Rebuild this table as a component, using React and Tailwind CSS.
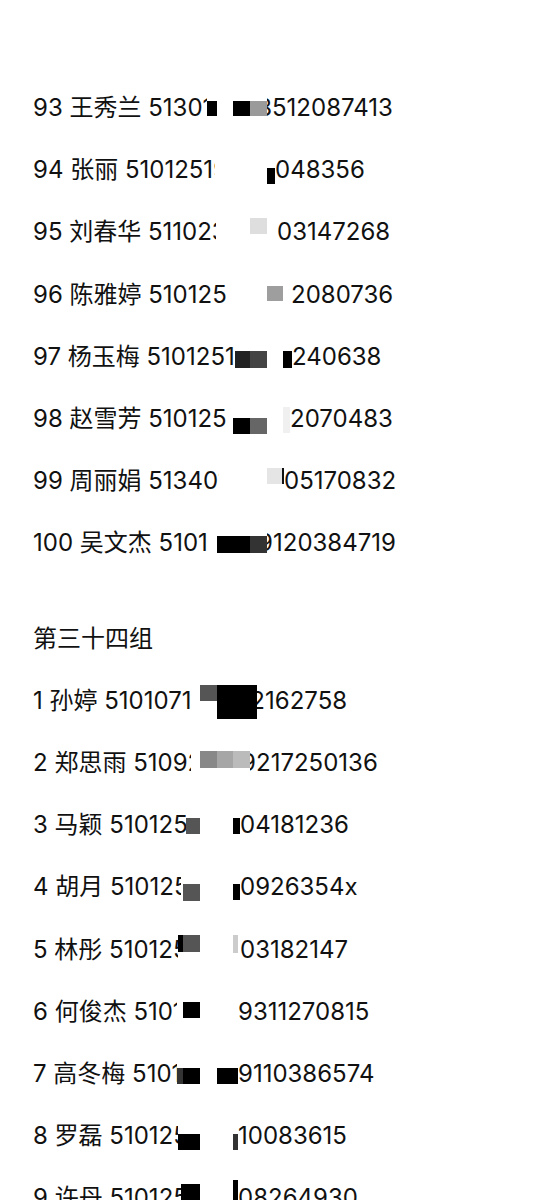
import React from 'react';

// Fictional placeholder names and digits in the same format as the reference list.
// x0: where the visible prefix gets cut, end: where the visible suffix starts,
// cut: partially visible digit before the suffix [char, visible px]
// r: mosaic cells [x1, x2, yOffsetFromCenter, height, colour]
const groupA = [
  { n: '93', name: '王秀兰', pre: '51301', x0: 207, end: 267, cut: ['8', 5], post: '512087413', r: [[207, 217, -7, 15, '#000'], [233, 250, -7, 15, '#000'], [250, 267, -7, 15, '#9a9a9a']] },
  { n: '94', name: '张丽', pre: '51012519', x0: 215, end: 275, post: '048356', r: [[267, 275, -2, 16, '#000']] },
  { n: '95', name: '刘春华', pre: '511023', x0: 216, end: 277, post: '03147268', r: [[250, 267, -14, 16, '#dedede']] },
  { n: '96', name: '陈雅婷', pre: '510125', x0: 226, end: 291, post: '2080736', r: [[267, 283, -9, 15, '#9e9e9e']] },
  { n: '97', name: '杨玉梅', pre: '5101251', x0: 235, end: 292, post: '240638', r: [[235, 250, -6, 17, '#222'], [250, 267, -6, 17, '#444'], [283, 292, -6, 17, '#000']] },
  { n: '98', name: '赵雪芳', pre: '510125', x0: 226, end: 290, post: '2070483', r: [[233, 250, -1, 16, '#000'], [250, 267, -1, 16, '#666'], [283, 290, -12, 26, '#f0f0f0']] },
  { n: '99', name: '周丽娟', pre: '513401', x0: 219, end: 284, post: '05170832', r: [[267, 282, -13, 16, '#e5e5e5'], [282, 284, -13, 16, '#111']] },
  { n: '100', name: '吴文杰', pre: '5101', x0: 210, end: 267, cut: ['9', 6], post: '120384719', r: [[217, 250, -7, 17, '#000'], [250, 267, -7, 17, '#333']] },
];

const groupB = [
  { n: '1', name: '孙婷', pre: '5101071', x0: 197, end: 257, cut: ['2', 8], post: '162758', r: [[200, 217, -16, 16, '#555'], [217, 257, -16, 34, '#000']] },
  { n: '2', name: '郑思雨', pre: '51092', x0: 191, end: 250, cut: ['9', 6], post: '217250136', r: [[200, 217, -12, 17, '#888'], [217, 233, -12, 17, '#a6a6a6'], [233, 250, -12, 17, '#bbb']] },
  { n: '3', name: '马颖', pre: '510125', x0: 186, end: 240, post: '04181236', r: [[186, 200, -7, 16, '#555'], [233, 240, -7, 16, '#000']] },
  { n: '4', name: '胡月', pre: '510125', x0: 181, end: 240, post: '0926354x', r: [[183, 200, -3, 17, '#555'], [233, 240, -3, 16, '#000']] },
  { n: '5', name: '林彤', pre: '510125', x0: 178, end: 240, post: '03182147', r: [[178, 183, -15, 17, '#000'], [183, 200, -15, 17, '#555'], [233, 238, -15, 18, '#ccc']] },
  { n: '6', name: '何俊杰', pre: '5101', x0: 177, end: 238, post: '9311270815', r: [[183, 200, -10, 16, '#000']] },
  { n: '7', name: '高冬梅', pre: '51012', x0: 177, end: 238, post: '9110386574', r: [[177, 183, -6, 16, '#333'], [183, 200, -6, 16, '#000'], [217, 238, -6, 16, '#000']] },
  { n: '8', name: '罗磊', pre: '510125', x0: 178, end: 238, post: '10083615', r: [[178, 200, -2, 16, '#000'], [233, 238, -2, 16, '#333']] },
  { n: '9', name: '许丹', pre: '510125', x0: 181, end: 238, post: '08264930', r: [[181, 200, -14, 17, '#000'], [233, 238, -18, 21, '#000']] },
];

const LEFT = 33;

function Mask({ x0, end, r }) {
  const w = end - x0;
  return (
    <svg width={w} height="40" viewBox={`0 0 ${w} 40`} className="shrink-0">
      {r.map(([a, b, y, h, f], i) => (
        <rect key={i} x={Math.max(a - x0, 0)} y={y + 20} width={b - Math.max(a, x0)} height={h} fill={f} />
      ))}
    </svg>
  );
}

function Row({ row }) {
  return (
    <div className="flex h-[62.2px] items-center whitespace-pre">
      <span className="inline-block shrink-0 overflow-hidden" style={{ width: row.x0 - LEFT }}>
        {`${row.n} ${row.name} ${row.pre}`}
      </span>
      <Mask x0={row.x0} end={row.end} r={row.r} />
      {row.cut && (
        <span className="inline-flex shrink-0 justify-end overflow-hidden" style={{ width: row.cut[1] }}>
          {row.cut[0]}
        </span>
      )}
      <span>{row.post}</span>
    </div>
  );
}

export default function App() {
  return (
    <div
      className="min-h-[1200px] w-[540px] overflow-hidden bg-white pl-[33px] pt-[77px] text-[24px] leading-[30px] text-[#111]"
      style={{ fontFamily: 'Inter, "Noto Sans CJK SC", sans-serif' }}
    >
      {groupA.map((row) => (
        <Row key={row.n} row={row} />
      ))}

      <div className="mt-[33px] flex h-[62.2px] items-center">第三十四组</div>

      {groupB.map((row) => (
        <Row key={row.n} row={row} />
      ))}
    </div>
  );
}
